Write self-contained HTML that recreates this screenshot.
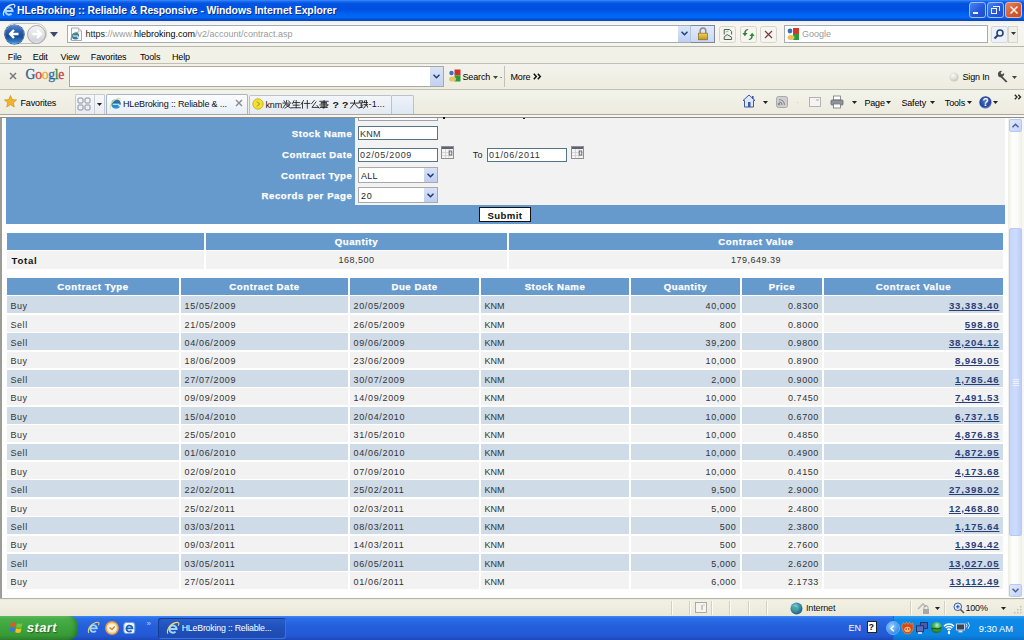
<!DOCTYPE html>
<html><head><meta charset="utf-8">
<style>
*{box-sizing:border-box}
html,body{margin:0;padding:0}
body{width:1024px;height:640px;position:relative;overflow:hidden;background:#ece9d8;font-family:"Liberation Sans",sans-serif;}
.a{position:absolute}
.t{position:absolute;white-space:nowrap;line-height:1}
/* content */
.lbl{color:#fff;font-weight:bold;font-size:9.6px;letter-spacing:.58px;-webkit-text-stroke:.25px #fff}
.hd{background:#6699cc;color:#fff;font-weight:bold;font-size:9.6px;letter-spacing:.58px;text-align:center;-webkit-text-stroke:.25px #fff}
.row{position:absolute;left:7px;width:996px;height:16.8px}
.c{position:absolute;top:0;height:16.8px;line-height:16.8px;padding-top:1.8px;font-size:9px;color:#333;letter-spacing:.55px;white-space:nowrap}
.o .c{background:#cfdbe7}
.e .c{background:#f2f2f2}
.c1{left:0;width:172px;padding-left:3.5px}
.c2{left:174px;width:167px;padding-left:3.5px}
.c3{left:343px;width:129px;padding-left:3.5px}
.c4{left:474px;width:148px;padding-left:3.5px;letter-spacing:0}
.c5{left:624px;width:109px;text-align:right;padding-right:3.6px}
.c6{left:735px;width:80px;text-align:right;padding-right:3.2px}
.c7{left:817px;width:179px;text-align:right;padding-right:3.6px;color:#27407a;font-weight:bold;font-size:9.6px;letter-spacing:.87px;text-decoration:underline}
.c2,.c3{letter-spacing:.66px}
.hrow .c{background:#6699cc;color:#fff;font-weight:bold;font-size:9.6px;text-align:center;letter-spacing:.58px;padding:0;padding-top:1.2px;-webkit-text-stroke:.25px #fff}
.menu{font-size:9px;color:#000;letter-spacing:-0.15px}
</style></head>
<body>

<!-- ============ TITLE BAR ============ -->
<div class="a" style="left:0;top:0;width:1024px;height:21px;background:linear-gradient(#3d8cff 0px,#1a6af0 1.5px,#0055e0 3.5px,#004fe0 9px,#0062f2 14px,#0068f8 17.5px,#0052d8 19px,#1c44a0 21px)"></div>
<svg class="a" style="left:2px;top:2.5px" width="14" height="14" viewBox="0 0 14 14"><path d="M3.6 8 H10.6 A3.6 3.6 0 1 0 9.6 10.6" fill="none" stroke="#a9d4ff" stroke-width="2"/><path d="M2 12.8 C0.2 10 3 3.5 9.5 1.6 C12.5 0.8 13.8 2 12.2 4.6" fill="none" stroke="#d8ecff" stroke-width="1.1"/></svg>
<div class="t" style="left:17px;top:5.5px;font-size:10.4px;font-weight:bold;color:#fff;letter-spacing:-0.07px;text-shadow:1px 1px 0 #0a2a8a">HLeBroking :: Reliable &amp; Responsive - Windows Internet Explorer</div>
<div class="a" style="left:969px;top:1.8px;width:16.5px;height:16.5px;border:1px solid #9cc0ff;border-radius:3px;background:linear-gradient(135deg,#4a84f2,#2558dc 55%,#2150c8)"></div>
<div class="a" style="left:973px;top:12px;width:5px;height:2.2px;background:#eef4ff"></div>
<div class="a" style="left:987.3px;top:1.8px;width:16.5px;height:16.5px;border:1px solid #9cc0ff;border-radius:3px;background:linear-gradient(135deg,#4a84f2,#2558dc 55%,#2150c8)"></div>
<div class="a" style="left:993px;top:5.5px;width:6.5px;height:5.5px;border:1px solid #eef4ff;border-top-width:1.5px;border-left:none;border-bottom:none"></div>
<div class="a" style="left:991px;top:8px;width:6px;height:5.5px;border:1px solid #eef4ff;border-top-width:1.5px"></div>
<div class="a" style="left:1005.3px;top:1.8px;width:16.5px;height:16.5px;border:1px solid #eeb4a4;border-radius:3px;background:linear-gradient(135deg,#e58462,#d25c34 55%,#c24e2a)"></div>
<svg class="a" style="left:1008.5px;top:5px" width="10" height="10" viewBox="0 0 10 10"><path d="M1.5 1.5 L8.5 8.5 M8.5 1.5 L1.5 8.5" stroke="#fff4ee" stroke-width="1.5"/></svg>

<!-- ============ ADDRESS ROW ============ -->
<div class="a" style="left:0;top:21px;width:1024px;height:25.5px;background:linear-gradient(#e6eef8 0%,#f7f6f1 12%,#f4f3ec 100%);border-bottom:1px solid #b9b7aa"></div>
<!-- back/forward -->
<div class="a" style="left:3.5px;top:22.8px;width:43.5px;height:21.5px;border-radius:11px;border:1px solid #c4c3ba;background:transparent"></div>
<div class="a" style="left:4.5px;top:24.5px;width:19px;height:19px;border-radius:50%;background:linear-gradient(#5287d2 0%,#2b5fae 35%,#1c4c96 60%,#2a76c4 85%,#55aee8 100%);box-shadow:0 0 0 0.6px #1a3f80"></div>
<svg class="a" style="left:7px;top:27px" width="14" height="14" viewBox="0 0 14 14"><path d="M7 3 L3 7 L7 11 M3.5 7 H11.5" fill="none" stroke="#fff" stroke-width="2.4" stroke-linejoin="round"/></svg>
<div class="a" style="left:27px;top:24.5px;width:19px;height:19px;border-radius:50%;border:1.2px solid #a9a9a9;background:linear-gradient(#f4f4f6,#dfe0e4 55%,#d2d4da 85%,#e8eaee)"></div>
<svg class="a" style="left:29.5px;top:27px" width="14" height="14" viewBox="0 0 14 14"><path d="M7 3 L11 7 L7 11 M2.5 7 H10.5" fill="none" stroke="#fff" stroke-width="2.4" stroke-linejoin="round"/></svg>
<svg class="a" style="left:50px;top:32px" width="8" height="5" viewBox="0 0 8 5"><path d="M0 0 H8 L4 5Z" fill="#3a4a6a"/></svg>
<!-- address box -->
<div class="a" style="left:67px;top:25px;width:624px;height:17.5px;background:#fff;border:1px solid #a5acb5"></div>
<svg class="a" style="left:69.5px;top:26.5px" width="13" height="15" viewBox="0 0 13 15"><path d="M1.5 1 H8.5 L11.5 4 V13.5 H1.5Z" fill="#fafafa" stroke="#a8a8a8" stroke-width="1"/><path d="M8.5 1 V4 H11.5" fill="none" stroke="#b8b8b8" stroke-width=".8"/></svg>
<svg class="a" style="left:70px;top:30px" width="11" height="11" viewBox="0 0 11 11"><circle cx="5.5" cy="6" r="3.6" fill="#3a7a9a"/><rect x="3" y="5.4" width="5" height="1.2" fill="#cfeaf5"/><path d="M7.2 7.2 H9.5" stroke="#fafafa" stroke-width="1.3"/><path d="M1.2 10 C0.5 7 3 3 8.5 2" fill="none" stroke="#7a9a60" stroke-width=".9"/></svg>
<div class="t" style="left:85.5px;top:30px;font-size:9px;color:#9a9a9a"><span style="color:#1a1a1a">https</span>://www.<span style="color:#000">hlebroking.com</span>/v2/account/contract.asp</div>
<div class="a" style="left:678px;top:26px;width:12px;height:15.5px;background:linear-gradient(#dbe6fa,#bccff3)"></div>
<svg class="a" style="left:680.5px;top:31px" width="7" height="5" viewBox="0 0 7 5"><path d="M0.5 0.8 L3.5 3.8 L6.5 0.8" fill="none" stroke="#1d3f7a" stroke-width="1.5"/></svg>
<div class="a" style="left:690px;top:25px;width:25px;height:17.5px;background:linear-gradient(#e2ebfb,#c8d8f5);border:1px solid #7d8896;border-left-color:#b8c4d6"></div>
<svg class="a" style="left:697px;top:26px" width="12" height="15" viewBox="0 0 12 15"><defs><linearGradient id="lk" x1="0" y1="0" x2="0" y2="1"><stop offset="0" stop-color="#f4d460"/><stop offset="1" stop-color="#c09020"/></linearGradient></defs><path d="M3.2 7.5 V4.8 A2.8 2.8 0 0 1 8.8 4.8 V7.5" fill="none" stroke="#8e8c80" stroke-width="1.5"/><rect x="1.6" y="7.2" width="8.8" height="6.6" fill="url(#lk)" stroke="#8a6a10" stroke-width=".7"/></svg>
<!-- compat/refresh/stop -->
<div class="a" style="left:719px;top:25.5px;width:17px;height:17px;border:1px solid #d6d4ca;border-radius:2.5px;background:#f6f5f0"></div>
<svg class="a" style="left:721.5px;top:27.5px" width="12" height="13" viewBox="0 0 12 13"><path d="M2.2 6.5 V1.5 H7.6 L9.6 3.5 V6.5" fill="#eef5ee" stroke="#4f5f50" stroke-width="1"/><path d="M2.2 11.5 V8.8 L5.2 6.6 L9.6 9.2 V11.5 Z" fill="#e6f2e6" stroke="#4f5f50" stroke-width="1"/><path d="M3.5 4 L6.5 3" stroke="#7ab07a" stroke-width=".8"/></svg>
<div class="a" style="left:739.5px;top:25.5px;width:17px;height:17px;border:1px solid #d6d4ca;border-radius:2.5px;background:#f6f5f0"></div>
<svg class="a" style="left:742px;top:27.5px" width="13" height="13" viewBox="0 0 13 13"><path d="M6.2 2 C4.6 2.2 3.8 3.4 3.8 5 L5.6 5 L2.8 8.2 L0.4 5 L2.2 5 C2.2 2.6 3.8 1 6.2 1Z" fill="#3a7a3a"/><path d="M6.8 11 C8.4 10.8 9.2 9.6 9.2 8 L7.4 8 L10.2 4.8 L12.6 8 L10.8 8 C10.8 10.4 9.2 12 6.8 12Z" fill="#2f8a30"/></svg>
<div class="a" style="left:760px;top:25.5px;width:17px;height:17px;border:1px solid #d6d4ca;border-radius:2.5px;background:#f6f5f0"></div>
<svg class="a" style="left:763px;top:28.5px" width="11" height="11" viewBox="0 0 11 11"><path d="M2 2 L9 9 M9 2 L2 9" stroke="#7a3a40" stroke-width="1.2"/></svg>
<!-- search box -->
<div class="a" style="left:784px;top:25px;width:204px;height:17.5px;background:#fff;border:1px solid #a5acb5"></div>
<svg class="a" style="left:786px;top:26.5px" width="14" height="14" viewBox="0 0 14 14"><rect x="7" y="1" width="6" height="6" fill="#d03a2a"/><rect x="7" y="7" width="6" height="6" fill="#2a9a3a"/><circle cx="4" cy="4" r="2.4" fill="#3a6ec0"/><ellipse cx="5" cy="10.5" rx="3.5" ry="2.5" fill="#e8c060"/></svg>
<div class="t" style="left:802px;top:29.5px;font-size:9px;color:#9a9a9a">Google</div>
<div class="a" style="left:991px;top:25.5px;width:17px;height:17px;border:1px solid #cfd7e4;border-radius:2px;background:#eef2f8"></div>
<svg class="a" style="left:993px;top:28px" width="12" height="12" viewBox="0 0 12 12"><circle cx="7" cy="5" r="3" fill="none" stroke="#26407e" stroke-width="1.6"/><path d="M4.8 7.2 L1.5 10.5" stroke="#26407e" stroke-width="2"/></svg>
<div class="a" style="left:1008px;top:25.5px;width:10px;height:17px;border:1px solid #d7d5ca;background:#f0efe8"></div>
<svg class="a" style="left:1011px;top:32px" width="5" height="3" viewBox="0 0 5 3"><path d="M0 0 H5 L2.5 3Z" fill="#333"/></svg>

<!-- ============ MENU ROW ============ -->
<div class="a" style="left:0;top:46.5px;width:1024px;height:17px;background:#f2f1e8;border-bottom:1px solid #c2c0b3"></div>
<div class="t menu" style="left:7.8px;top:52.5px">File</div>
<div class="t menu" style="left:32.8px;top:52.5px">Edit</div>
<div class="t menu" style="left:60.5px;top:52.5px">View</div>
<div class="t menu" style="left:90.8px;top:52.5px">Favorites</div>
<div class="t menu" style="left:140px;top:52.5px">Tools</div>
<div class="t menu" style="left:172px;top:52.5px">Help</div>

<!-- ============ GOOGLE TOOLBAR ============ -->
<div class="a" style="left:0;top:63.5px;width:1024px;height:26px;background:linear-gradient(#f4f3eb,#eeece0);border-bottom:1px solid #c2c0b3"></div>
<svg class="a" style="left:8.5px;top:72px" width="8" height="8" viewBox="0 0 8 8"><path d="M1 1 L7 7 M7 1 L1 7" stroke="#7a7a7a" stroke-width="1.5"/></svg>
<div class="t" style="left:25.6px;top:68.3px;font-family:'Liberation Serif',serif;font-size:13.7px;letter-spacing:-0.3px;-webkit-text-stroke:.3px currentColor"><span style="color:#2f5f98">G</span><span style="color:#c8454e">o</span><span style="color:#e2aa32">o</span><span style="color:#2f68aa">g</span><span style="color:#3f8a42">l</span><span style="color:#c63e4a">e</span></div>
<div class="a" style="left:69px;top:65.5px;width:374.5px;height:21px;background:#fff;border:1px solid #a9a9a0"></div>
<div class="a" style="left:430px;top:66.5px;width:12.5px;height:19px;background:linear-gradient(#dbe4f6,#c2d1ef)"></div>
<svg class="a" style="left:433px;top:74px" width="7" height="5" viewBox="0 0 7 5"><path d="M0.5 0.8 L3.5 3.8 L6.5 0.8" fill="none" stroke="#1d3f7a" stroke-width="1.5"/></svg>
<svg class="a" style="left:447.5px;top:69px" width="13" height="13" viewBox="0 0 13 13"><rect x="6.5" y="0.5" width="6" height="6" fill="#c8352a"/><rect x="6.5" y="6.5" width="6" height="6" fill="#2a9a3a"/><circle cx="3.5" cy="4" r="2.2" fill="#3a6ec0"/><ellipse cx="4.5" cy="10" rx="3.5" ry="2.6" fill="#e6c46a"/></svg>
<div class="t menu" style="left:462.5px;top:73px">Search</div>
<svg class="a" style="left:493px;top:76px" width="5" height="3" viewBox="0 0 5 3"><path d="M0 0 H5 L2.5 3Z" fill="#444"/></svg>
<div class="a" style="left:500px;top:77px;width:2px;height:1px;background:#999"></div>
<div class="a" style="left:504px;top:66px;width:1px;height:21px;background:#c3c1b5"></div>
<div class="t menu" style="left:510.5px;top:73px">More</div>
<svg class="a" style="left:532.5px;top:73px" width="9" height="7" viewBox="0 0 9 7"><path d="M0.8 0.8 L3.3 3.5 L0.8 6.2 M4.8 0.8 L7.3 3.5 L4.8 6.2" fill="none" stroke="#111" stroke-width="1.5"/></svg>
<svg class="a" style="left:948.5px;top:72px" width="10" height="10" viewBox="0 0 10 10"><defs><radialGradient id="sgn" cx=".4" cy=".35" r=".7"><stop offset="0" stop-color="#fbfbfb"/><stop offset="1" stop-color="#c4c4bc"/></radialGradient></defs><circle cx="5" cy="5" r="4.6" fill="url(#sgn)"/></svg>
<div class="t menu" style="left:962.5px;top:73px">Sign In</div>
<svg class="a" style="left:996px;top:70px" width="13" height="13" viewBox="0 0 13 13"><path d="M2 4 A3 3 0 0 1 6 1 L4.5 3 L6 4.5 L8 3 A3 3 0 0 1 6.5 6.5 L11.5 11.5 L10 12.5 L5 7.5 A3 3 0 0 1 2 4Z" fill="#4a4a4a"/></svg>
<svg class="a" style="left:1012px;top:76px" width="5" height="3" viewBox="0 0 5 3"><path d="M0 0 H5 L2.5 3Z" fill="#444"/></svg>

<!-- ============ FAVORITES / TABS ROW ============ -->
<div class="a" style="left:0;top:90px;width:1024px;height:24px;background:linear-gradient(#f4f3eb,#edebdf)"></div>
<svg class="a" style="left:4px;top:95px" width="13" height="13" viewBox="0 0 13 13"><path d="M6.5 0.5 L8.3 4.6 L12.6 4.9 L9.3 7.7 L10.3 12 L6.5 9.7 L2.7 12 L3.7 7.7 L0.4 4.9 L4.7 4.6Z" fill="#f2b52a" stroke="#c98a10" stroke-width=".6"/></svg>
<div class="t menu" style="left:20.5px;top:98.6px">Favorites</div>
<div class="a" style="left:75px;top:94px;width:30px;height:20px;border:1px solid #c5cad3;border-bottom:none;border-radius:2px 2px 0 0;background:linear-gradient(#f7f8fb,#e8ecf3)"></div>
<div class="a" style="left:93.5px;top:94.5px;width:1px;height:19px;background:#cbd0d8"></div>
<svg class="a" style="left:77px;top:97px" width="14" height="14" viewBox="0 0 14 14"><rect x="1" y="1" width="5" height="5" rx="1" fill="none" stroke="#8a8f98" stroke-width="1"/><rect x="8" y="1" width="5" height="5" rx="1" fill="none" stroke="#8a8f98" stroke-width="1"/><rect x="1" y="8" width="5" height="5" rx="1" fill="none" stroke="#8a8f98" stroke-width="1"/><rect x="8" y="8" width="5" height="5" rx="1" fill="none" stroke="#8a8f98" stroke-width="1"/></svg>
<svg class="a" style="left:97px;top:103px" width="5" height="3" viewBox="0 0 5 3"><path d="M0 0 H5 L2.5 3Z" fill="#222"/></svg>
<!-- active tab -->
<div class="a" style="left:105.5px;top:93.5px;width:142px;height:21px;border:1px solid #a7b3c6;border-bottom:none;border-radius:2px 2px 0 0;background:linear-gradient(#fcfdff,#e6edf8)"></div>
<svg class="a" style="left:108px;top:96px" width="14" height="14" viewBox="0 0 14 14"><defs><linearGradient id="ieg" x1="0" y1="0" x2="0" y2="1"><stop offset="0" stop-color="#3d6f98"/><stop offset=".45" stop-color="#1f70b0"/><stop offset="1" stop-color="#3a9ed8"/></linearGradient></defs><circle cx="8" cy="8" r="4.8" fill="url(#ieg)"/><rect x="4.6" y="7.6" width="6.8" height="1.5" fill="#a8e0ff"/><path d="M10.5 9.6 H13" stroke="#eef4fb" stroke-width="1.6"/><path d="M2.6 13 C1.2 10 3.2 4.8 9.5 2.6 C11.6 2 12.6 2.6 12 4" stroke="#d8e6a8" stroke-width="1.1" fill="none"/></svg>
<div class="t menu" style="left:123px;top:99.8px;color:#111">HLeBroking :: Reliable &amp; ...</div>
<svg class="a" style="left:235px;top:99px" width="8" height="8" viewBox="0 0 8 8"><path d="M1 1 L7 7 M7 1 L1 7" stroke="#8a8a8a" stroke-width="1.4"/></svg>
<!-- second tab -->
<div class="a" style="left:248.5px;top:94.5px;width:143px;height:20px;border:1px solid #b9c2d0;border-bottom:none;border-radius:2px 2px 0 0;background:linear-gradient(#f3f6fa,#e3e9f2)"></div>
<svg class="a" style="left:251.5px;top:97.5px" width="12" height="12" viewBox="0 0 12 12"><circle cx="6" cy="6" r="5.2" fill="#f2e22a" stroke="#c9a80a" stroke-width=".8"/><path d="M5 3.5 L7.5 6 L5 8.5" fill="none" stroke="#777" stroke-width=".9"/></svg>
<div class="t menu" style="left:265.5px;top:100.5px;color:#111">knm</div>
<svg class="a" style="left:281.5px;top:100.3px" width="86" height="10" viewBox="0 0 86 10"><g transform="scale(1,0.86)"><g fill="none" stroke="#1a1a1a" stroke-width="0.9" stroke-linecap="square">
<g transform="translate(0,0)"><path d="M2 1 L2.8 2.6 M1 3.6 H8.8 M6.6 1 L7.6 2.4 M4.6 0.6 L4 4 L1 9.2 M4 5.6 H8 L3 9.4 M5 6.8 L8.8 9.4"/></g>
<g transform="translate(9,0)"><path d="M3 0.8 L1.6 4 M2.6 3 H8.6 M5.2 0.5 V9 M2.2 6 H8.2 M0.6 9 H9.4"/></g>
<g transform="translate(18.5,0)"><path d="M3 0.6 L0.6 5 M2 3 V9.6 M3.8 4 H9.4 M6.8 0.5 V9.6"/></g>
<g transform="translate(28,0)"><path d="M4.2 0.6 L1.6 4.2 M6 2.2 L2 8.6 H8.6 M7 6.4 L9 9.4"/></g>
<g transform="translate(37,0)"><path d="M0.8 1.5 H9.2 M2.6 2.9 H7.6 V4.4 H2.6Z M0.8 5.7 H9.2 M2 7.2 H8.2 V5.7 M1.4 8.7 H8.2 M5.1 0.5 V9.5 L4 9.2"/></g>
</g>
<text x="50.5" y="9.6" font-family="Liberation Sans" font-weight="bold" font-size="10.5" fill="#1a1a1a">?</text>
<text x="60" y="9.6" font-family="Liberation Sans" font-weight="bold" font-size="10.5" fill="#1a1a1a">?</text>
<g fill="none" stroke="#1a1a1a" stroke-width="0.95" stroke-linecap="square">
<g transform="translate(67.5,0)"><path d="M1 3.6 H9 M5 0.5 V3.6 L1 9.5 M5.2 4.6 L9.2 9.5"/></g>
<g transform="translate(77,0)"><path d="M0.8 1 H3.6 V3.4 H0.8Z M2.2 3.4 V8.6 M2.2 6 H3.6 M0.4 9 L3.8 8.2 M6 0.6 L5 3 M5 3 H9.4 M5 5.4 H9.4 M7.4 0.5 V5.4 L4.8 9.5 M7.4 6 L9.5 9.5"/></g>
</g></g></svg>
<div class="t menu" style="left:368.5px;top:100.3px;color:#111;letter-spacing:.2px">-1...</div>
<div class="a" style="left:391.5px;top:94.5px;width:22px;height:20px;border:1px solid #b9c2d0;border-bottom:none;border-left:none;border-radius:0 2px 0 0;background:linear-gradient(#eef3fa,#dde6f2)"></div>
<!-- command bar -->
<svg class="a" style="left:742px;top:94px" width="14" height="14" viewBox="0 0 14 14"><path d="M7 1 L13 6.5 H11.5 V13 H2.5 V6.5 H1Z" fill="#dfe6f4" stroke="#3b5ba8" stroke-width="1"/><rect x="6" y="8" width="2.5" height="5" fill="#3b5ba8"/><rect x="10" y="2" width="1.6" height="3" fill="#3b5ba8"/></svg>
<svg class="a" style="left:763px;top:101px" width="5" height="3" viewBox="0 0 5 3"><path d="M0 0 H5 L2.5 3Z" fill="#222"/></svg>
<svg class="a" style="left:776px;top:96px" width="12" height="12" viewBox="0 0 12 12"><rect x=".5" y=".5" width="11" height="11" rx="2" fill="#cfcfcf" stroke="#9c9c9c" stroke-width=".8"/><path d="M3 9 A0.8 0.8 0 1 1 3.01 9 M3 6 A3 3 0 0 1 6 9 M3 3.5 A5.5 5.5 0 0 1 8.5 9" fill="none" stroke="#8a8a8a" stroke-width="1.1"/></svg>
<div class="a" style="left:796.5px;top:101.5px;width:1.5px;height:1.5px;background:#c9c9c9"></div>
<svg class="a" style="left:808.5px;top:97px" width="12" height="10" viewBox="0 0 12 10"><rect x=".5" y=".5" width="11" height="9" fill="#f4f4f4" stroke="#a4a4a4" stroke-width=".8"/><path d="M7 3 H10" stroke="#999" stroke-width=".8"/></svg>
<svg class="a" style="left:830px;top:95px" width="14" height="14" viewBox="0 0 14 14"><rect x="3.5" y="1" width="7" height="4" fill="#fff" stroke="#777" stroke-width=".8"/><rect x="1" y="5" width="12" height="5" rx="1" fill="#8c949c" stroke="#5d6670" stroke-width=".8"/><rect x="3.5" y="9" width="7" height="4" fill="#fff" stroke="#777" stroke-width=".8"/></svg>
<svg class="a" style="left:852px;top:101px" width="5" height="3" viewBox="0 0 5 3"><path d="M0 0 H5 L2.5 3Z" fill="#222"/></svg>
<div class="t menu" style="left:864.4px;top:98.7px">Page</div>
<svg class="a" style="left:886px;top:101px" width="5" height="3" viewBox="0 0 5 3"><path d="M0 0 H5 L2.5 3Z" fill="#222"/></svg>
<div class="t menu" style="left:901.4px;top:98.7px">Safety</div>
<svg class="a" style="left:930px;top:101px" width="5" height="3" viewBox="0 0 5 3"><path d="M0 0 H5 L2.5 3Z" fill="#222"/></svg>
<div class="t menu" style="left:944.8px;top:98.7px">Tools</div>
<svg class="a" style="left:967px;top:101px" width="5" height="3" viewBox="0 0 5 3"><path d="M0 0 H5 L2.5 3Z" fill="#222"/></svg>
<svg class="a" style="left:979px;top:95.5px" width="13" height="13" viewBox="0 0 13 13"><defs><radialGradient id="hlp" cx=".45" cy=".4" r=".6"><stop offset="0" stop-color="#4a70c8"/><stop offset=".75" stop-color="#23459a"/><stop offset="1" stop-color="#8aa6d8"/></radialGradient></defs><circle cx="6.5" cy="6.5" r="6.2" fill="url(#hlp)"/><text x="6.5" y="10.2" font-family="Liberation Sans" font-weight="bold" font-size="10" fill="#fff" text-anchor="middle">?</text></svg>
<svg class="a" style="left:993px;top:101px" width="5" height="3" viewBox="0 0 5 3"><path d="M0 0 H5 L2.5 3Z" fill="#222"/></svg>
<svg class="a" style="left:1013.5px;top:94px" width="8" height="6" viewBox="0 0 8 6"><path d="M0.8 0.8 L3 3 L0.8 5.2 M4.3 0.8 L6.5 3 L4.3 5.2" fill="none" stroke="#222" stroke-width="1.3"/></svg>

<!-- separator lines below tabs -->
<div class="a" style="left:0;top:113.5px;width:1024px;height:1px;background:#a9a79c"></div>
<div class="a" style="left:0;top:114.5px;width:1024px;height:3px;background:#f7f6f2"></div>
<div class="a" style="left:0;top:117.2px;width:1024px;height:1px;background:#8d8c86"></div>

<!-- ============ CONTENT ============ -->
<div class="a" style="left:0;top:118px;width:1024px;height:479.5px;background:#fff;overflow:hidden">
  <div class="a" style="left:0;top:0;width:2px;height:480px;background:#9d9d98"></div>
  <div class="a" style="left:1022px;top:0;width:2px;height:480px;background:#f6f6f2"></div>
</div>
<!-- form -->
<div class="a" style="left:6px;top:118px;width:349px;height:86.5px;background:#6699cc"></div>
<div class="a" style="left:355px;top:118px;width:650px;height:86.5px;background:#f2f2f2"></div>
<div class="a" style="left:358px;top:118px;width:80px;height:2.5px;border:1px solid #9aa3a8;border-top:none;background:#fafafa"></div>
<div class="a" style="left:442.5px;top:117px;width:2px;height:2px;background:#111"></div>
<div class="a" style="left:522.5px;top:117.5px;width:2px;height:1.5px;background:#222"></div>
<div class="t lbl" style="right:671.6px;top:129.2px">Stock Name</div>
<div class="t lbl" style="right:671.6px;top:149.9px">Contract Date</div>
<div class="t lbl" style="right:671.6px;top:170.6px">Contract Type</div>
<div class="t lbl" style="right:671.6px;top:191.2px">Records per Page</div>
<div class="a" style="left:358px;top:126px;width:80px;height:14px;background:#fff;border:1px solid #557587"></div>
<div class="t" style="left:360px;top:129.5px;font-size:9px;color:#333;letter-spacing:.2px">KNM</div>
<div class="a" style="left:358px;top:148px;width:80px;height:14px;background:#fff;border:1px solid #557587"></div>
<div class="t" style="left:360px;top:151.2px;font-size:9px;color:#333;letter-spacing:.7px">02/05/2009</div>
<svg class="a" style="left:441px;top:146px" width="13" height="13" viewBox="0 0 13 13"><rect x=".5" y=".5" width="12" height="12" fill="#f4f4f4" stroke="#8f8f8f" stroke-width="1"/><rect x="1" y="1" width="11" height="2" fill="#5a6478"/><path d="M1 6.5 H12 M1 9.5 H12 M4.5 3 V12 M8 3 V12" stroke="#c8c8c8" stroke-width=".7"/><rect x="8.2" y="5" width="2.6" height="4" fill="none" stroke="#555" stroke-width=".8"/></svg>
<div class="t" style="left:472.8px;top:151.2px;font-size:9px;color:#222;letter-spacing:.3px">To</div>
<div class="a" style="left:487px;top:148px;width:80px;height:14px;background:#fff;border:1px solid #557587"></div>
<div class="t" style="left:489px;top:151.2px;font-size:9px;color:#333;letter-spacing:.7px">01/06/2011</div>
<svg class="a" style="left:570.5px;top:146px" width="13" height="13" viewBox="0 0 13 13"><rect x=".5" y=".5" width="12" height="12" fill="#f4f4f4" stroke="#8f8f8f" stroke-width="1"/><rect x="1" y="1" width="11" height="2" fill="#5a6478"/><path d="M1 6.5 H12 M1 9.5 H12 M4.5 3 V12 M8 3 V12" stroke="#c8c8c8" stroke-width=".7"/><rect x="8.2" y="5" width="2.6" height="4" fill="none" stroke="#555" stroke-width=".8"/></svg>
<div class="a" style="left:358px;top:167px;width:80px;height:15.5px;background:#fff;border:1px solid #a9a9a9"></div>
<div class="a" style="left:424px;top:168px;width:13px;height:13.5px;background:linear-gradient(#d8e2f8,#bfcff0)"></div>
<svg class="a" style="left:427px;top:172.5px" width="7" height="5" viewBox="0 0 7 5"><path d="M0.5 0.8 L3.5 3.8 L6.5 0.8" fill="none" stroke="#22386e" stroke-width="1.5"/></svg>
<div class="t" style="left:361px;top:171.5px;font-size:9px;color:#222;letter-spacing:.3px">ALL</div>
<div class="a" style="left:358px;top:187px;width:80px;height:15.5px;background:#fff;border:1px solid #a9a9a9"></div>
<div class="a" style="left:424px;top:188px;width:13px;height:13.5px;background:linear-gradient(#d8e2f8,#bfcff0)"></div>
<svg class="a" style="left:427px;top:192.5px" width="7" height="5" viewBox="0 0 7 5"><path d="M0.5 0.8 L3.5 3.8 L6.5 0.8" fill="none" stroke="#22386e" stroke-width="1.5"/></svg>
<div class="t" style="left:361px;top:191.5px;font-size:9px;color:#222;letter-spacing:.7px">20</div>
<!-- submit bar -->
<div class="a" style="left:6px;top:204.5px;width:999px;height:19.5px;background:#6699cc"></div>
<div class="a" style="left:479px;top:207px;width:52px;height:14.5px;background:#fff;border:1.6px solid #111"></div>
<div class="t" style="left:487.5px;top:210.5px;font-size:9.6px;font-weight:bold;color:#111;letter-spacing:.4px">Submit</div>

<!-- summary table -->
<div class="a hd" style="left:7px;top:233px;width:197px;height:16.5px"></div>
<div class="a hd" style="left:206px;top:233px;width:301px;height:16.5px;line-height:18px">Quantity</div>
<div class="a hd" style="left:509px;top:233px;width:494px;height:16.5px;line-height:18px">Contract Value</div>
<div class="a" style="left:7px;top:251px;width:197px;height:17.5px;background:#f2f2f2"></div>
<div class="a" style="left:206px;top:251px;width:301px;height:17.5px;background:#f2f2f2"></div>
<div class="a" style="left:509px;top:251px;width:494px;height:17.5px;background:#f2f2f2"></div>
<div class="t" style="left:11.5px;top:255.7px;font-size:9.6px;font-weight:bold;color:#111;letter-spacing:.75px">Total</div>
<div class="t" style="left:206px;width:301px;text-align:center;top:255.7px;font-size:9px;color:#333;letter-spacing:.5px">168,500</div>
<div class="t" style="left:509px;width:494px;text-align:center;top:255.7px;font-size:9px;color:#333;letter-spacing:.5px">179,649.39</div>

<!-- main table -->
<div id="tbl"></div>
<div class="row hrow" style="top:278.2px"><div class="c c1">Contract Type</div><div class="c c2">Contract Date</div><div class="c c3">Due Date</div><div class="c c4" style="letter-spacing:.58px">Stock Name</div><div class="c c5">Quantity</div><div class="c c6">Price</div><div class="c c7" style="color:#fff;text-decoration:none;letter-spacing:.58px">Contract Value</div></div>
<div class="row o" style="top:296.4px"><div class="c c1">Buy</div><div class="c c2">15/05/2009</div><div class="c c3">20/05/2009</div><div class="c c4">KNM</div><div class="c c5">40,000</div><div class="c c6">0.8300</div><div class="c c7">33,383.40</div></div>
<div class="row e" style="top:314.8px"><div class="c c1">Sell</div><div class="c c2">21/05/2009</div><div class="c c3">26/05/2009</div><div class="c c4">KNM</div><div class="c c5">800</div><div class="c c6">0.8000</div><div class="c c7">598.80</div></div>
<div class="row o" style="top:333.2px"><div class="c c1">Sell</div><div class="c c2">04/06/2009</div><div class="c c3">09/06/2009</div><div class="c c4">KNM</div><div class="c c5">39,200</div><div class="c c6">0.9800</div><div class="c c7">38,204.12</div></div>
<div class="row e" style="top:351.6px"><div class="c c1">Buy</div><div class="c c2">18/06/2009</div><div class="c c3">23/06/2009</div><div class="c c4">KNM</div><div class="c c5">10,000</div><div class="c c6">0.8900</div><div class="c c7">8,949.05</div></div>
<div class="row o" style="top:370px"><div class="c c1">Sell</div><div class="c c2">27/07/2009</div><div class="c c3">30/07/2009</div><div class="c c4">KNM</div><div class="c c5">2,000</div><div class="c c6">0.9000</div><div class="c c7">1,785.46</div></div>
<div class="row e" style="top:388.4px"><div class="c c1">Buy</div><div class="c c2">09/09/2009</div><div class="c c3">14/09/2009</div><div class="c c4">KNM</div><div class="c c5">10,000</div><div class="c c6">0.7450</div><div class="c c7">7,491.53</div></div>
<div class="row o" style="top:406.8px"><div class="c c1">Buy</div><div class="c c2">15/04/2010</div><div class="c c3">20/04/2010</div><div class="c c4">KNM</div><div class="c c5">10,000</div><div class="c c6">0.6700</div><div class="c c7">6,737.15</div></div>
<div class="row e" style="top:425.2px"><div class="c c1">Buy</div><div class="c c2">25/05/2010</div><div class="c c3">31/05/2010</div><div class="c c4">KNM</div><div class="c c5">10,000</div><div class="c c6">0.4850</div><div class="c c7">4,876.83</div></div>
<div class="row o" style="top:443.6px"><div class="c c1">Sell</div><div class="c c2">01/06/2010</div><div class="c c3">04/06/2010</div><div class="c c4">KNM</div><div class="c c5">10,000</div><div class="c c6">0.4900</div><div class="c c7">4,872.95</div></div>
<div class="row e" style="top:462px"><div class="c c1">Buy</div><div class="c c2">02/09/2010</div><div class="c c3">07/09/2010</div><div class="c c4">KNM</div><div class="c c5">10,000</div><div class="c c6">0.4150</div><div class="c c7">4,173.68</div></div>
<div class="row o" style="top:480.4px"><div class="c c1">Sell</div><div class="c c2">22/02/2011</div><div class="c c3">25/02/2011</div><div class="c c4">KNM</div><div class="c c5">9,500</div><div class="c c6">2.9000</div><div class="c c7">27,398.02</div></div>
<div class="row e" style="top:498.8px"><div class="c c1">Buy</div><div class="c c2">25/02/2011</div><div class="c c3">02/03/2011</div><div class="c c4">KNM</div><div class="c c5">5,000</div><div class="c c6">2.4800</div><div class="c c7">12,468.80</div></div>
<div class="row o" style="top:517.2px"><div class="c c1">Sell</div><div class="c c2">03/03/2011</div><div class="c c3">08/03/2011</div><div class="c c4">KNM</div><div class="c c5">500</div><div class="c c6">2.3800</div><div class="c c7">1,175.64</div></div>
<div class="row e" style="top:535.6px"><div class="c c1">Buy</div><div class="c c2">09/03/2011</div><div class="c c3">14/03/2011</div><div class="c c4">KNM</div><div class="c c5">500</div><div class="c c6">2.7600</div><div class="c c7">1,394.42</div></div>
<div class="row o" style="top:554px"><div class="c c1">Sell</div><div class="c c2">03/05/2011</div><div class="c c3">06/05/2011</div><div class="c c4">KNM</div><div class="c c5">5,000</div><div class="c c6">2.6200</div><div class="c c7">13,027.05</div></div>
<div class="row e" style="top:572.4px"><div class="c c1">Buy</div><div class="c c2">27/05/2011</div><div class="c c3">01/06/2011</div><div class="c c4">KNM</div><div class="c c5">6,000</div><div class="c c6">2.1733</div><div class="c c7">13,112.49</div></div>

<!-- scrollbar -->
<div class="a" style="left:1008px;top:118px;width:14px;height:479px;background:linear-gradient(90deg,#eeede5,#fdfdfa 30%,#fbfbf7 70%,#eeede6)"></div>
<div class="a" style="left:1008.5px;top:118.5px;width:13px;height:13px;border:1px solid #b7c8f2;border-radius:2px;background:linear-gradient(135deg,#dfe8fd,#c2d3fb)"></div>
<svg class="a" style="left:1011.5px;top:122.5px" width="7" height="5" viewBox="0 0 7 5"><path d="M0.5 4.2 L3.5 1.2 L6.5 4.2" fill="none" stroke="#4d6185" stroke-width="1.5"/></svg>
<div class="a" style="left:1009px;top:228px;width:13px;height:308px;border:1px solid #b8c9f6;border-radius:2px;background:linear-gradient(90deg,#c5d5fc,#cddbfd 50%,#bccdf8)"></div>
<div class="a" style="left:1012.5px;top:379px;width:6px;height:1px;background:#eef3ff;box-shadow:0 2px 0 #eef3ff,0 4px 0 #eef3ff,0 6px 0 #eef3ff"></div>
<div class="a" style="left:1008.5px;top:583.5px;width:13px;height:13px;border:1px solid #b7c8f2;border-radius:2px;background:linear-gradient(135deg,#dfe8fd,#c2d3fb)"></div>
<svg class="a" style="left:1011.5px;top:587.5px" width="7" height="5" viewBox="0 0 7 5"><path d="M0.5 0.8 L3.5 3.8 L6.5 0.8" fill="none" stroke="#4d6185" stroke-width="1.5"/></svg>

<!-- ============ STATUS BAR ============ -->
<div class="a" style="left:0;top:597.8px;width:1024px;height:1.7px;background:#b4b2a8"></div>
<div class="a" style="left:0;top:599.5px;width:1024px;height:16.5px;background:linear-gradient(#f3f1e4,#ebe8d8)"></div>
<div class="a" style="left:670.5px;top:601px;width:1px;height:14px;background:#d2d0c4;box-shadow:1px 0 0 #fbfaf4"></div>
<div class="a" style="left:689px;top:601px;width:1px;height:14px;background:#d2d0c4;box-shadow:1px 0 0 #fbfaf4"></div>
<div class="a" style="left:711px;top:601px;width:1px;height:14px;background:#d2d0c4;box-shadow:1px 0 0 #fbfaf4"></div>
<div class="a" style="left:729.4px;top:601px;width:1px;height:14px;background:#d2d0c4;box-shadow:1px 0 0 #fbfaf4"></div>
<div class="a" style="left:748px;top:601px;width:1px;height:14px;background:#d2d0c4;box-shadow:1px 0 0 #fbfaf4"></div>
<div class="a" style="left:766px;top:601px;width:1px;height:14px;background:#d2d0c4;box-shadow:1px 0 0 #fbfaf4"></div>
<div class="a" style="left:910px;top:601px;width:1px;height:14px;background:#d2d0c4;box-shadow:1px 0 0 #fbfaf4"></div>
<div class="a" style="left:944px;top:601px;width:1px;height:14px;background:#d2d0c4;box-shadow:1px 0 0 #fbfaf4"></div>
<svg class="a" style="left:695px;top:602px" width="12" height="11" viewBox="0 0 12 11"><rect x=".5" y=".5" width="11" height="10" fill="#f5f4ef" stroke="#9a9a94" stroke-width=".8"/><path d="M7 3 V8 M8.5 3 H9.5" stroke="#888" stroke-width=".8"/></svg>
<svg class="a" style="left:790px;top:601.5px" width="13" height="13" viewBox="0 0 13 13"><defs><radialGradient id="glb" cx=".4" cy=".35" r=".7"><stop offset="0" stop-color="#8fd6e8"/><stop offset=".5" stop-color="#3a8fb0"/><stop offset="1" stop-color="#1d5a80"/></radialGradient></defs><circle cx="6.5" cy="6.5" r="6" fill="url(#glb)"/><path d="M2.5 4.5 C4 3.5 5 5.5 6.5 4.5 C7.5 6 6 7.5 7.5 9 C6 10.5 4 9 3.5 7.5Z M8.5 2.5 C10 3 11 4.5 11 6 C10 5.5 9 4 8.5 2.5Z" fill="#4aa070" opacity=".8"/></svg>
<div class="t menu" style="left:806px;top:603.5px;color:#111">Internet</div>
<svg class="a" style="left:917px;top:601.5px" width="13" height="13" viewBox="0 0 13 13"><path d="M1 7 L6 2 L9 5" fill="none" stroke="#b8b8b8" stroke-width="1.6"/><rect x="6" y="7" width="6" height="5" fill="#a8a8a8"/><path d="M7 7 V5.5 A2 2 0 0 1 11 5.5 V7" fill="none" stroke="#a8a8a8" stroke-width="1"/></svg>
<svg class="a" style="left:935px;top:607px" width="5" height="3" viewBox="0 0 5 3"><path d="M0 0 H5 L2.5 3Z" fill="#222"/></svg>
<svg class="a" style="left:953px;top:601.5px" width="12" height="12" viewBox="0 0 12 12"><circle cx="4.8" cy="4.8" r="3.8" fill="#dde8f6" stroke="#3a5d9a" stroke-width="1"/><path d="M3 4.8 H6.6 M4.8 3 V6.6" stroke="#2a58b0" stroke-width="1.1"/><path d="M7.5 7.5 L11 11" stroke="#555" stroke-width="1.6"/></svg>
<div class="t menu" style="left:965.4px;top:603.5px;color:#111">100%</div>
<svg class="a" style="left:1001px;top:607px" width="5" height="3" viewBox="0 0 5 3"><path d="M0 0 H5 L2.5 3Z" fill="#222"/></svg>
<svg class="a" style="left:1014px;top:604px" width="9" height="11" viewBox="0 0 9 11"><g fill="#c2c0b4"><rect x="6" y="2" width="1.5" height="1.5"/><rect x="3" y="5" width="1.5" height="1.5"/><rect x="6" y="5" width="1.5" height="1.5"/><rect x="0" y="8" width="1.5" height="1.5"/><rect x="3" y="8" width="1.5" height="1.5"/><rect x="6" y="8" width="1.5" height="1.5"/></g></svg>

<!-- ============ TASKBAR ============ -->
<div class="a" style="left:0;top:616px;width:1024px;height:24px;background:linear-gradient(#3d8af5 0%,#2a6ee8 10%,#245edb 45%,#2459d6 80%,#1c48b8 100%)"></div>
<div class="a" style="left:0;top:616px;width:77.6px;height:24px;border-radius:0 9px 9px 0;background:linear-gradient(#69c469 0%,#48b048 12%,#3ea53e 45%,#379a37 80%,#2e842e 100%);box-shadow:inset -4px 0 5px -2px rgba(20,70,20,.5)"></div>
<svg class="a" style="left:9px;top:620px" width="16" height="16" viewBox="0 0 16 16"><path d="M2 3 Q4.5 1.5 7 3 L6.2 7 Q3.8 5.6 1.2 7Z" fill="#e8542a"/><path d="M8 3.2 Q10.5 4.6 13.5 3 L12.7 7.2 Q10 8.5 7.2 7.2Z" fill="#7ac23a"/><path d="M1 8 Q3.6 6.7 6 8 L5.2 12 Q2.8 10.7 0.2 12Z" fill="#3a78d8"/><path d="M7 8.2 Q9.8 9.5 12.5 8.2 L11.7 12.3 Q9 13.6 6.2 12.3Z" fill="#f2c21a"/></svg>
<div class="t" style="left:26.3px;top:621px;font-size:13px;font-weight:bold;color:#f4fff0;text-shadow:1px 1px 1px #2a5a2a;letter-spacing:.4px;transform:skewX(-9deg);transform-origin:0 100%">start</div>
<svg class="a" style="left:87px;top:621px" width="13" height="13" viewBox="0 0 14 14"><path d="M3.6 8 H10.6 A3.6 3.6 0 1 0 9.6 10.6" fill="none" stroke="#9bd6ff" stroke-width="2"/><path d="M2 12.8 C0.2 10 3 3.5 9.5 1.6 C12.5 0.8 13.8 2 12.2 4.6" fill="none" stroke="#f3d36a" stroke-width="1.1"/></svg>
<svg class="a" style="left:105px;top:621px" width="14" height="14" viewBox="0 0 14 14"><circle cx="7" cy="7" r="6.2" fill="#f6dca0" stroke="#e39a45" stroke-width="1.4"/><circle cx="7" cy="7" r="4" fill="#fff4d8"/><path d="M4.5 6.5 L7 8.5 L9.8 5.5" fill="none" stroke="#c8782a" stroke-width="1.2"/></svg>
<svg class="a" style="left:123px;top:621px" width="13" height="14" viewBox="0 0 13 14"><rect x="0.8" y="1.5" width="11" height="11" rx="2.5" fill="#f2f7ff" stroke="#6f9ee0" stroke-width="1"/><path d="M3.6 7.4 H9.4 A3 3 0 1 0 8.6 9.6" fill="none" stroke="#1f5fc0" stroke-width="1.8"/></svg>
<div class="t" style="left:146.5px;top:620px;font-size:8px;color:#bcd4ff">»</div>
<div class="a" style="left:158px;top:617.5px;width:128px;height:21.5px;border-radius:3px;background:linear-gradient(#2a5fcf,#1f4fb9 50%,#1e4bb0);box-shadow:inset 1px 1px 0 #163c96,inset -1px -1px 0 #3a73dc"></div>
<svg class="a" style="left:165.5px;top:621px" width="14" height="14" viewBox="0 0 14 14"><path d="M3.6 8 H10.6 A3.6 3.6 0 1 0 9.6 10.6" fill="none" stroke="#9bd6ff" stroke-width="2"/><path d="M2 12.8 C0.2 10 3 3.5 9.5 1.6 C12.5 0.8 13.8 2 12.2 4.6" fill="none" stroke="#f3d36a" stroke-width="1.1"/></svg>
<div class="t" style="left:181.7px;top:624px;font-size:8.8px;letter-spacing:-0.2px;color:#fff">HLeBroking :: Reliable...</div>
<!-- tray -->
<div class="t" style="left:848.5px;top:624px;font-size:9px;color:#fff">EN</div>
<div class="a" style="left:866.5px;top:621px;width:10px;height:12px;background:#fff;border:1px solid #222"></div>
<div class="t" style="left:868.6px;top:622.5px;font-size:9px;font-weight:bold;color:#111">?</div>
<div class="a" style="left:892.5px;top:616px;width:131.5px;height:24px;background:linear-gradient(#2fa0f5 0%,#0e8ae8 15%,#0c84e2 80%,#0a70c8 100%);border-left:1px solid #1a6ac0"></div>
<div class="a" style="left:885.5px;top:621px;width:14px;height:14px;border-radius:50%;background:radial-gradient(circle at 40% 35%,#9ad0ff,#3a8ef0 70%,#2a70d0);border:1px solid #6ab0f5"></div>
<svg class="a" style="left:889px;top:624.5px" width="7" height="7" viewBox="0 0 7 7"><path d="M4.8 0.8 L2 3.5 L4.8 6.2" fill="none" stroke="#fff" stroke-width="1.5"/></svg>
<svg class="a" style="left:901px;top:620.5px" width="13" height="14" viewBox="0 0 13 14"><path d="M1 4 L2.5 1.5 L4 3.5 L5.5 1 L7 3.5 L8.5 1 L10 3.5 L11.5 1.8 L12.2 5 C12.5 9 10 13 6.5 13 C3 13 0.5 9 1 4Z" fill="#d8441c" stroke="#f09a50" stroke-width=".6"/><ellipse cx="6.5" cy="8.5" rx="3.2" ry="2.8" fill="#f5b860"/><circle cx="5.2" cy="8" r=".7" fill="#7a2a10"/><circle cx="7.8" cy="8" r=".7" fill="#7a2a10"/></svg>
<svg class="a" style="left:915.5px;top:621.5px" width="12" height="12" viewBox="0 0 12 12"><rect x="4.5" y=".5" width="7" height="6" fill="#4a5aa8" stroke="#1c2a60" stroke-width=".8"/><rect x=".5" y="3.8" width="7" height="6" fill="#5a6cc0" stroke="#1c2a60" stroke-width=".8"/><rect x="2" y="10.2" width="4" height="1.6" fill="#e8e8f0"/></svg>
<svg class="a" style="left:929.5px;top:621px" width="13" height="13" viewBox="0 0 13 13"><defs><radialGradient id="gg" cx=".55" cy=".3" r=".7"><stop offset="0" stop-color="#b8f0ff"/><stop offset=".35" stop-color="#5ac05a"/><stop offset="1" stop-color="#1f6a1f"/></radialGradient></defs><circle cx="6.5" cy="6.5" r="5.6" fill="url(#gg)"/><path d="M1.5 8 C4 6 8 10 11.5 6.5" fill="none" stroke="#1a5a1a" stroke-width="1.2"/></svg>
<svg class="a" style="left:942.5px;top:620.5px" width="12" height="14" viewBox="0 0 12 14"><path d="M1 5.2 A7 7 0 0 1 11 5.2 M2.7 7 A4.6 4.6 0 0 1 9.3 7 M4.3 8.8 A2.3 2.3 0 0 1 7.7 8.8" fill="none" stroke="#fff" stroke-width="1.5"/><path d="M6 9.2 C4.5 10.5 4.4 13.2 6 13.2 C7.6 13.2 7.5 10.5 6 9.2Z" fill="#fff"/></svg>
<svg class="a" style="left:955.5px;top:621px" width="14" height="13" viewBox="0 0 14 13"><rect x=".5" y="3" width="8" height="6" fill="#3a4458" stroke="#d8dce8" stroke-width=".9"/><rect x="2.5" y="9.6" width="4" height="1.8" fill="#e0e0e8"/><path d="M10 2.5 A3 3 0 0 1 10 6.5 M12 1.2 A5 5 0 0 1 12 7.8" fill="none" stroke="#e8f0ff" stroke-width=".9"/></svg>
<div class="t" style="left:978.7px;top:624px;font-size:9.4px;color:#fff">9:30 AM</div>

</body></html>
